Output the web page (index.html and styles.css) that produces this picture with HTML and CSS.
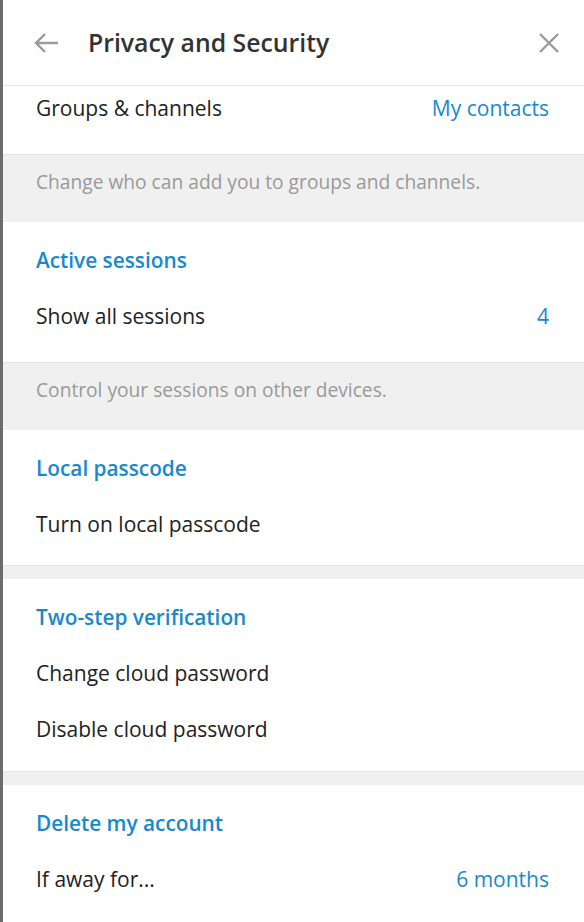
FILE: index.html
```
<!DOCTYPE html>
<html>
<head>
<meta charset="utf-8">
<link rel="stylesheet" href="styles.css">
</head>
<body>
<div class="shell">
  <div class="edge"></div>
  <div class="panel">
    <header class="topbar">
      <svg class="back" width="26" height="22" viewBox="0 0 26 22"><path d="M25 11H3M12 2L3 11l9 9" fill="none" stroke="#9a9a9a" stroke-width="2.4"/></svg>
      <h1 class="title">Privacy and Security</h1>
      <svg class="close" width="22" height="22" viewBox="0 0 22 22"><path d="M2 2L20 20M20 2L2 20" fill="none" stroke="#9a9a9a" stroke-width="2.4"/></svg>
    </header>
    <div class="scroll">
      <section class="card first">
        <div class="row"><span>Groups &amp; channels</span><span class="value">My contacts</span></div>
      </section>
      <div class="about">Change who can add you to groups and channels.</div>
      <section class="card tall">
        <div class="subhead">Active sessions</div>
        <div class="row"><span>Show all sessions</span><span class="value">4</span></div>
      </section>
      <div class="about">Control your sessions on other devices.</div>
      <section class="card short">
        <div class="subhead">Local passcode</div>
        <div class="row"><span>Turn on local passcode</span></div>
      </section>
      <div class="skip"></div>
      <section class="card">
        <div class="subhead">Two-step verification</div>
        <div class="row"><span>Change cloud password</span></div>
        <div class="row"><span>Disable cloud password</span></div>
      </section>
      <div class="skip"></div>
      <section class="card">
        <div class="subhead">Delete my account</div>
        <div class="row"><span>If away for...</span><span class="value">6 months</span></div>
      </section>
    </div>
  </div>
</div>
</body>
</html>
```
FILE: styles.css
```
html, body {
  margin: 0;
  padding: 0;
  height: 100%;
  background: #fff;
}
body {
  font-family: "Open Sans", "Noto Sans", sans-serif;
  color: #222;
  overflow: hidden;
}
.shell {
  display: flex;
  height: 922px;
}
.edge {
  width: 3px;
  flex: none;
  background: #6b6b6b;
}
.panel {
  flex: 1;
  display: flex;
  flex-direction: column;
  min-width: 0;
}
.topbar {
  flex: none;
  display: flex;
  align-items: center;
  padding: 0 24px 0 30px;
  border-bottom: 1px solid #e6e6e6;
  box-sizing: border-box;
  height: 86px;
}
.back { flex: none; }
.title {
  flex: 1;
  margin: -2px 0 0 29px;
  font-size: 24.8px;
  font-weight: 600;
  color: #333;
}
.close { flex: none; }
.scroll {
  flex: 1;
  overflow: hidden;
}
.card {
  background: #fff;
  padding: 10px 0 14px;
}
.card.first {
  margin-top: -6px;
  padding-top: 0;
  padding-bottom: 18px;
}
.card.tall { padding-bottom: 18px; }
.card.short { padding-bottom: 13px; }
.subhead {
  height: 56px;
  display: flex;
  align-items: center;
  padding: 0 35px 0 33px;
  color: #168acd;
  font-size: 20.8px;
  font-weight: 600;
}
.row {
  height: 56px;
  display: flex;
  align-items: center;
  justify-content: space-between;
  padding: 0 35px 0 33px;
  font-size: 21px;
  color: #222;
}
.value { color: #168acd; }
.about {
  background: #f0f0f0;
  border-top: 1px solid #e2e2e2;
  color: #999;
  font-size: 19.2px;
  padding: 11px 35px 24px 33px;
  line-height: 32px;
}
.skip {
  height: 13px;
  background: #f0f0f0;
  border-top: 1px solid #e2e2e2;
}
```
